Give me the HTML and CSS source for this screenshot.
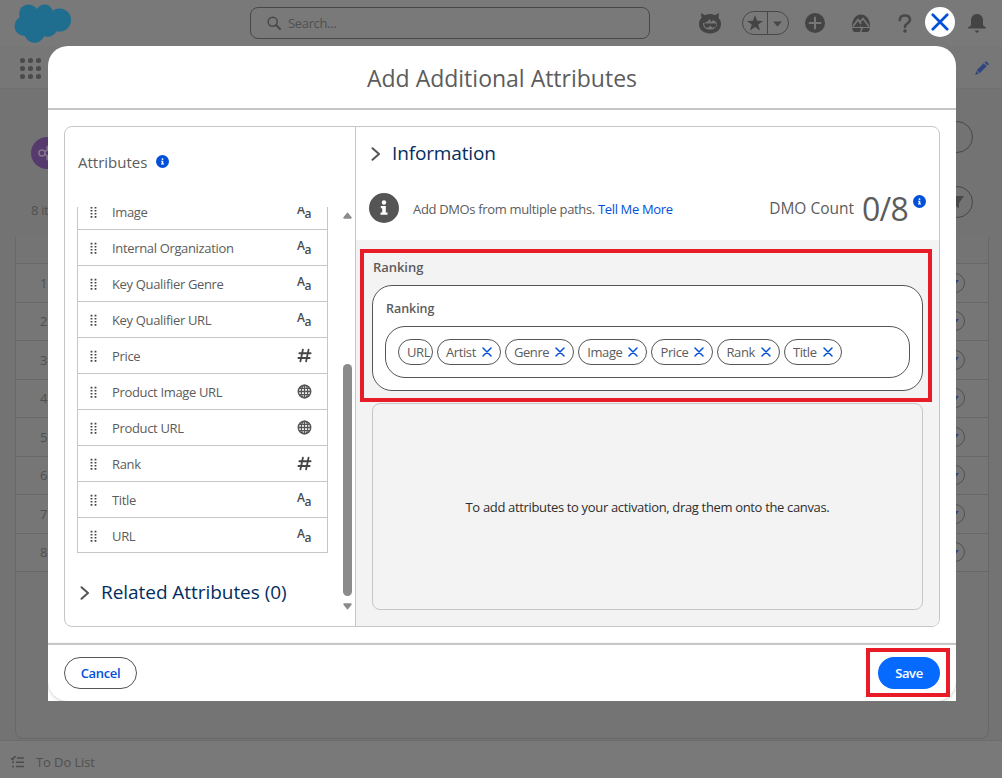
FILE: index.html
```html
<!DOCTYPE html>
<html lang="en">
<head>
  <meta charset="UTF-8">
  <title>Add Additional Attributes</title>
  <meta name="viewport" content="width=device-width, initial-scale=1.0">
  <link rel="stylesheet" href="styles.css">
</head>

<body>

<!-- shared icons -->
<svg class="sprite">
  <symbol id="i-info" viewBox="0 0 30 30">
    <circle cx="15" cy="15" r="15"/>
    <g fill="#fff"><circle cx="15" cy="9.500" r="2.200"/><path d="M11.800 13h5v6.500h1.700v2.300h-7v-2.300h1.700v-4.200h-1.400z"/></g>
  </symbol>
  <symbol id="i-close" viewBox="0 0 10 10">
    <path d="M1 1l8 8M9 1l-8 8" fill="none" stroke="currentColor" stroke-width="1.500" stroke-linecap="round"/>
  </symbol>
  <symbol id="i-chevron" viewBox="0 0 10 14">
    <path d="M1.500 1.200L8 7l-6.500 5.800" fill="none" stroke="#555" stroke-width="2" stroke-linecap="round" stroke-linejoin="round"/>
  </symbol>
  <symbol id="i-drag" viewBox="0 0 7 12">
    <path d="M1.500 .8v12M5.500 .8v12" fill="none" stroke="#444" stroke-width="1.800" stroke-dasharray="1.600 1.500"/>
  </symbol>
  <symbol id="i-hash" viewBox="0 0 14 14">
    <path d="M5.500 1.500L3.200 12.500M10.800 1.500L8.500 12.500M2.200 4.900h10.500M1.300 9.300h10.500" fill="none" stroke="#444" stroke-width="1.700" stroke-linecap="round"/>
  </symbol>
  <symbol id="i-globe" viewBox="0 0 14 14">
    <g fill="none" stroke="#555" stroke-width="1.200"><circle cx="7" cy="7" r="5.800" stroke-width="1.400"/><ellipse cx="7" cy="7" rx="3" ry="6"/><path d="M7 1v12M1 7h12M2 4h10M2 10h10"/></g>
  </symbol>
  <symbol id="i-down" viewBox="0 0 8 5"><path d="M0 0h8L4 5z"/></symbol>
</svg>

<div class="page">
  <header class="topbar">
    <svg class="logo" viewBox="0 0 58 42">
      <g fill="#1f6e8f"><circle cx="15" cy="12" r="9.500"/><circle cx="31" cy="11" r="8.500"/><circle cx="46" cy="18" r="11.500"/><circle cx="11" cy="24" r="10"/><circle cx="21" cy="31" r="10"/><circle cx="34" cy="25" r="10"/><circle cx="27" cy="18" r="12"/></g>
    </svg>
    <div class="search">
      <svg width="14" height="14" viewBox="0 0 14 14"><path d="M9 9l4 4" stroke="#484848" stroke-width="2" stroke-linecap="round"/><circle cx="5.700" cy="5.700" r="4.500" fill="none" stroke="#484848" stroke-width="1.500"/></svg>
      <span>Search...</span>
    </div>
    <div class="tools">
      <svg class="t-astro" width="24" height="22" viewBox="0 0 24 22">
        <path fill="#444" d="M3 1l4 2.300a11 11 0 0 1 10 0L21 1l-.5 5c2 2 2.500 3.500 2.500 6 0 6-5 9.500-11 9.500S1 18 1 12c0-2.500.5-4 2.500-6z"/>
        <path fill="#777" d="M5 11c3 0 5-2 7-4l1 3 2-2c2 1 3 2 4 3 0 5-3 6.500-7 6.500s-7-1.500-7-6.500z"/>
        <path fill="#444" d="M6 11.500h12.500l-1 3.500q-2 1-4 0l-1.200-1.500L11 15q-2 1-4 0z"/>
      </svg>
      <div class="favs">
        <svg width="16" height="16" viewBox="0 0 16 16"><path fill="#444" d="M8 0l2 5.800 6 .1-4.800 3.700L13 15.500 8 12l-5 3.500 1.800-5.900L0 5.900l6-.1z"/></svg>
        <i></i>
        <svg class="favs-down" width="9" height="6" viewBox="0 0 8 5" fill="#484848"><use href="#i-down"/></svg>
      </div>
      <svg class="t-add" width="20" height="20" viewBox="0 0 20 20"><circle cx="10" cy="10" r="10" fill="#444"/><path d="M10 4.500v11M4.500 10h11" stroke="#777" stroke-width="2" stroke-linecap="round"/></svg>
      <svg class="t-trail" width="20" height="20" viewBox="0 0 20 20">
        <path fill="#444" d="M1 12C1.500 6 5 1.500 10 1.500S18.500 6 19 12v2H1z"/>
        <path d="M2 13.500l5-7 3 4.500M8.500 9.500L12 5.500l6 8" fill="none" stroke="#777" stroke-width="1.700"/>
        <path d="M1 15h18q-.5 3-2.500 4h-13Q1.500 18 1 15z" fill="#444"/>
        <path d="M9 13.500l2 2-1.500 3.500" fill="none" stroke="#777" stroke-width="1.500"/>
      </svg>
      <svg class="t-help" width="14" height="19" viewBox="0 0 14 19"><path d="M1.800 6C1.800 3 4 1.500 7 1.500S12 3.300 12 6c0 3.500-5 3-5 7" fill="none" stroke="#484848" stroke-width="2.600" stroke-linecap="round"/><circle cx="7" cy="17" r="1.800" fill="#484848"/></svg>
      <svg class="t-bell" width="18" height="19" viewBox="0 0 18 19"><path fill="#444" d="M9 0c4 0 6 3 6 6.500V11c0 1 3 1.500 3 3.500H0C0 12.500 3 12 3 11V6.500C3 3 5 0 9 0zM6.500 16.500h5L9 19z"/></svg>
    </div>
  </header>
  <nav class="navbar">
    <div class="waffle"><i></i><i></i><i></i><i></i><i></i><i></i><i></i><i></i><i></i></div>
    <svg width="14" height="14" viewBox="0 0 14 14" fill="#2f4580"><path d="M1.700 9.200l7-7 3 3-7 7zM9.500 1.500l1-1q.5-.5 1 0l2 2q.5.5 0 1l-1 1zM1.200 10l2.700 2.700L.3 13.700z"/></svg>
  </nav>

  <main class="board">
    <div class="board-head">
      <div class="obj-icon"><svg width="20" height="20" viewBox="0 0 20 20" fill="none" stroke="#847691" stroke-width="1.500"><circle cx="5" cy="10" r="3"/><circle cx="12" cy="5" r="2"/><circle cx="12" cy="15" r="2"/><path d="M8 9l3-3M8 11l3 3"/></svg></div>
      <div class="round-btn"></div>
    </div>
    <div class="board-sub">
      <span>8 items</span>
      <div class="round-btn"><svg width="14" height="14" viewBox="0 0 14 14"><path fill="#484848" d="M0 1h14L9 8v5L5 11V8z"/></svg></div>
    </div>
    <div class="table">
      <div class="thead"></div>
      <div class="trow"><span>1</span><b><svg viewBox="0 0 8 5"><use href="#i-down"/></svg></b></div>
      <div class="trow"><span>2</span><b><svg viewBox="0 0 8 5"><use href="#i-down"/></svg></b></div>
      <div class="trow"><span>3</span><b><svg viewBox="0 0 8 5"><use href="#i-down"/></svg></b></div>
      <div class="trow"><span>4</span><b><svg viewBox="0 0 8 5"><use href="#i-down"/></svg></b></div>
      <div class="trow"><span>5</span><b><svg viewBox="0 0 8 5"><use href="#i-down"/></svg></b></div>
      <div class="trow"><span>6</span><b><svg viewBox="0 0 8 5"><use href="#i-down"/></svg></b></div>
      <div class="trow"><span>7</span><b><svg viewBox="0 0 8 5"><use href="#i-down"/></svg></b></div>
      <div class="trow"><span>8</span><b><svg viewBox="0 0 8 5"><use href="#i-down"/></svg></b></div>
    </div>
  </main>

  <footer class="utility">
    <svg width="13" height="12" viewBox="0 0 13 12" fill="none" stroke="#4c4c4c" stroke-width="1.600"><path d="M0 2l1.500 1.500L4.500 0M6 2h7M5 6.300h8M5 10.500h8M1 6.300h2M1 10.500h2"/></svg>
    <span>To Do List</span>
  </footer>
</div>

<button class="modal-close"><svg width="18" height="18"><use href="#i-close"/></svg></button>

<div class="modal">
  <div class="modal-header"><h1>Add Additional Attributes</h1></div>

  <div class="modal-body">
    <div class="panel">
      <aside class="attributes">
        <div class="attributes-title">Attributes <svg class="info-sm"><use href="#i-info"/></svg></div>
        <div class="attributes-scroll">
          <div class="attributes-content">
            <ul class="attr-list">
              <li><svg class="drag"><use href="#i-drag"/></svg><span>Image</span><em>A<sub>a</sub></em></li>
              <li><svg class="drag"><use href="#i-drag"/></svg><span>Internal Organization</span><em>A<sub>a</sub></em></li>
              <li><svg class="drag"><use href="#i-drag"/></svg><span>Key Qualifier Genre</span><em>A<sub>a</sub></em></li>
              <li><svg class="drag"><use href="#i-drag"/></svg><span>Key Qualifier URL</span><em>A<sub>a</sub></em></li>
              <li><svg class="drag"><use href="#i-drag"/></svg><span>Price</span><svg class="type"><use href="#i-hash"/></svg></li>
              <li><svg class="drag"><use href="#i-drag"/></svg><span>Product Image URL</span><svg class="type"><use href="#i-globe"/></svg></li>
              <li><svg class="drag"><use href="#i-drag"/></svg><span>Product URL</span><svg class="type"><use href="#i-globe"/></svg></li>
              <li><svg class="drag"><use href="#i-drag"/></svg><span>Rank</span><svg class="type"><use href="#i-hash"/></svg></li>
              <li><svg class="drag"><use href="#i-drag"/></svg><span>Title</span><em>A<sub>a</sub></em></li>
              <li><svg class="drag"><use href="#i-drag"/></svg><span>URL</span><em>A<sub>a</sub></em></li>
            </ul>
            <h2 class="related"><svg class="chevron"><use href="#i-chevron"/></svg>Related Attributes (0)</h2>
          </div>
          <div class="scrollbar">
            <svg width="9" height="7" viewBox="0 0 10 7"><path d="M5 0l4.500 5.500q.5 1.500-1 1.500h-7Q0 7 .5 5.500z"/></svg>
            <div class="thumb"></div>
            <svg width="9" height="7" viewBox="0 0 10 7"><path d="M5 7L.5 1.500Q0 0 1.500 0h7q1.500 0 1 1.500z"/></svg>
          </div>
        </div>
      </aside>

      <section class="canvas">
        <div class="canvas-info">
          <h2><svg class="chevron"><use href="#i-chevron"/></svg>Information</h2>
          <div class="dmo">
            <svg class="info-lg"><use href="#i-info"/></svg>
            <p>Add DMOs from multiple paths. <a>Tell Me More</a></p>
            <span class="dmo-label">DMO Count</span>
            <span class="dmo-count">0/8</span>
            <svg class="info-sm"><use href="#i-info"/></svg>
          </div>
        </div>

        <div class="canvas-area">
          <div class="highlight highlight-ranking"></div>
          <h3>Ranking</h3>
          <div class="ranking">
            <h4>Ranking</h4>
            <div class="pills">
              <span class="pill pill-cut">URL</span>
              <span class="pill">Artist <svg><use href="#i-close"/></svg></span>
              <span class="pill">Genre <svg><use href="#i-close"/></svg></span>
              <span class="pill">Image <svg><use href="#i-close"/></svg></span>
              <span class="pill">Price <svg><use href="#i-close"/></svg></span>
              <span class="pill">Rank <svg><use href="#i-close"/></svg></span>
              <span class="pill">Title <svg><use href="#i-close"/></svg></span>
            </div>
          </div>
          <div class="dropzone">To add attributes to your activation, drag them onto the canvas.</div>
        </div>
      </section>
    </div>
  </div>

  <div class="modal-footer">
    <button class="btn">Cancel</button>
    <button class="btn btn-primary">Save</button>
    <div class="highlight highlight-save"></div>
  </div>
</div>

</body>
</html>
```
FILE: styles.css
```css
* {
  margin: 0;
  padding: 0;
  box-sizing: border-box;
}

body {
  width: 1002px;
  height: 778px;
  overflow: hidden;
  position: relative;
  font-family: "Open Sans", "Noto Sans", sans-serif;
  font-size: 13px;
  letter-spacing: -0.34px;
  color: #5c5c5c;
}

svg {
  display: block;
  flex: none;
}

.sprite {
  position: absolute;
  width: 0;
  height: 0;
}

/* page behind the modal */
.page {
  height: 778px;
  display: flex;
  flex-direction: column;
  background: #737373;
  color: #505050;
}

.topbar {
  height: 46px;
  display: flex;
  align-items: center;
  padding-left: 13px;
  background: #797979;
}

.logo {
  width: 59px;
  height: 42px;
}

.search {
  width: 400px;
  height: 32px;
  margin-left: 178px;
  padding-left: 16px;
  display: flex;
  align-items: center;
  gap: 7px;
  border: 1px solid #484848;
  border-radius: 8px;
}

.tools {
  display: flex;
  align-items: center;
  margin-left: 48px;
}

.favs {
  width: 47px;
  height: 24px;
  margin-left: 20px;
  padding: 0 4px;
  display: flex;
  align-items: center;
  gap: 4px;
  border: 1px solid #484848;
  border-radius: 12px;
}

.favs i {
  width: 1px;
  height: 22px;
  background: #484848;
}

.favs-down {
  margin: 2px 0 0 1px;
}

.t-add { margin-left: 16px; }
.t-trail { margin-left: 26px; }
.t-help { margin-left: 27px; }
.t-bell { margin-left: 56px; }

.navbar {
  height: 43px;
  display: flex;
  justify-content: space-between;
  align-items: center;
  padding: 2px 13px 0 20px;
  background: #777;
  border-bottom: 1px solid #707070;
}

.waffle {
  display: grid;
  grid-template-columns: repeat(3, 5px);
  gap: 3px;
}

.waffle i {
  width: 5px;
  height: 5px;
  border-radius: 50%;
  background: #4a4a4a;
}

.board {
  flex: 1;
  padding: 32px 13px 0 15px;
}

.board-head,
.board-sub {
  display: flex;
  justify-content: space-between;
  padding: 0 16px;
}

.board-head {
  height: 65px;
}

.board-sub {
  height: 51px;
}

.board-sub span {
  padding-top: 15px;
}

.obj-icon {
  width: 32px;
  height: 32px;
  margin-top: 16px;
  padding: 6px;
  border-radius: 50%;
  background: #573a6d;
}

.round-btn {
  width: 32px;
  height: 32px;
  display: flex;
  align-items: center;
  justify-content: center;
  border: 1px solid #484848;
  border-radius: 50%;
}

.table {
  height: 502px;
  border: 1px solid #686868;
  border-top: 0;
  border-radius: 0 0 8px 8px;
  background: #747474;
}

.thead {
  height: 27px;
  border-bottom: 1px solid #686868;
}

.trow {
  height: 38.5px;
  display: flex;
  align-items: center;
  justify-content: space-between;
  padding: 0 23px 0 24px;
  border-bottom: 1px solid #686868;
  background: #767676;
}

.trow b {
  width: 20px;
  height: 20px;
  display: flex;
  align-items: center;
  justify-content: center;
  border: 1px solid #505050;
  border-radius: 50%;
}

.trow b svg {
  width: 8px;
  height: 5px;
  fill: #34427a;
}

.utility {
  height: 38px;
  display: flex;
  align-items: center;
  gap: 12px;
  padding: 4px 0 0 11px;
  border-top: 1px solid #6c6c6c;
  background: #797979;
  letter-spacing: -0.1px;
}

/* modal */
.modal-close {
  position: absolute;
  left: 925px;
  top: 7px;
  width: 30px;
  height: 30px;
  display: flex;
  align-items: center;
  justify-content: center;
  border: 0;
  border-radius: 50%;
  background: #fff;
  color: #0250d9;
}

.modal {
  position: absolute;
  left: 48px;
  top: 46px;
  width: 908px;
  height: 655px;
  display: flex;
  flex-direction: column;
  overflow: hidden;
  border-radius: 20px 20px 0 0;
  background: #fff;
}

.modal-header {
  height: 64px;
  padding-top: 16px;
  border-bottom: 2px solid #c6c6c6;
  text-align: center;
}

h1 {
  font-size: 23px;
  line-height: 33px;
  font-weight: 400;
  letter-spacing: 0;
}

.modal-body {
  flex: 1;
  padding: 16px;
}

.panel {
  height: 501px;
  display: flex;
  overflow: hidden;
  border: 1px solid #c6c6c6;
  border-radius: 8px;
}

.attributes {
  width: 291px;
  border-right: 1px solid #c6c6c6;
}

.attributes-title {
  height: 80px;
  display: flex;
  align-items: center;
  gap: 9px;
  padding: 0 0 11px 13px;
  font-size: 15px;
  letter-spacing: 0;
}

.info-sm {
  width: 13px;
  height: 13px;
  fill: #0250d9;
}

.attributes-scroll {
  height: 419px;
  display: flex;
  overflow: hidden;
}

.attributes-content {
  width: 263px;
  margin-top: -13px;
  padding-left: 12px;
}

.attr-list {
  list-style: none;
  border: 1px solid #c6c6c6;
  border-top: 0;
}

.attr-list li {
  height: 36px;
  display: flex;
  align-items: center;
  padding: 0 15px 0 12px;
  border-bottom: 1px solid #c6c6c6;
}

.attr-list li:last-child {
  height: 35px;
  margin-bottom: -1px;
  border-bottom: 0;
}

.attr-list span {
  flex: 1;
  margin-left: 15px;
}

.drag {
  width: 7px;
  height: 12px;
}

.type {
  width: 15px;
  height: 15px;
}

.attr-list em {
  width: 15px;
  height: 18px;
  font-style: normal;
  font-weight: 600;
  font-size: 12px;
  line-height: 14px;
  white-space: nowrap;
  color: #4a4a4a;
}

.attr-list sub {
  font-size: 12px;
  line-height: 0;
  position: relative;
  top: 1px;
  vertical-align: sub;
}

h2 {
  display: flex;
  align-items: center;
  font-size: 19px;
  line-height: 26px;
  font-weight: 400;
  letter-spacing: -0.15px;
  color: #032d60;
}

.chevron {
  width: 10px;
  height: 14px;
  margin: 2px 11px 0 0;
}

.related {
  padding: 26px 0 0 3px;
  letter-spacing: -0.05px;
}

.scrollbar {
  width: 9px;
  margin-left: 15px;
  padding-top: 5px;
  fill: #8b8b8b;
}

.thumb {
  width: 9px;
  height: 232px;
  margin: 145px 0 7px;
  border-radius: 5px;
  background: #8b8b8b;
}

.canvas {
  flex: 1;
  display: flex;
  flex-direction: column;
}

.canvas-info {
  height: 113px;
  padding: 13px 13px 0 13px;
}

.canvas-info h2 {
  padding-left: 2px;
}

.dmo {
  height: 48px;
  margin-top: 18px;
  display: flex;
  align-items: center;
}

.info-lg {
  width: 30px;
  height: 30px;
  margin-bottom: 1px;
  fill: #555;
}

.dmo p {
  flex: 1;
  margin: 2px 0 0 14px;
}

.dmo a {
  color: #0250d9;
}

.dmo-label {
  font-size: 15.5px;
  letter-spacing: 0;
}

.dmo-count {
  margin: 0 5px 0 8px;
  font-size: 32px;
  letter-spacing: -0.8px;
}

.dmo .info-sm {
  margin-bottom: 13px;
}

.canvas-area {
  flex: 1;
  position: relative;
  padding: 18px 16px 16px;
  background: #f3f3f3;
}

h3,
h4 {
  padding-left: 1px;
  font-size: 13px;
  line-height: 18px;
  font-weight: 600;
  letter-spacing: -0.05px;
}

.ranking {
  height: 106px;
  margin-top: 9px;
  padding: 14px 12px;
  border: 1px solid #555;
  border-radius: 20px;
  background: #fff;
}

h4 {
  font-size: 12.5px;
}

.pills {
  height: 52px;
  margin-top: 8px;
  padding: 12px;
  display: flex;
  gap: 4px;
  border: 1px solid #555;
  border-radius: 20px;
}

.pill {
  height: 26px;
  display: flex;
  align-items: center;
  gap: 6px;
  padding: 0 8px;
  border: 1px solid #555;
  border-radius: 13px;
  letter-spacing: -0.4px;
}

.pill svg {
  width: 10px;
  height: 10px;
  color: #0250d9;
}

.pill-cut {
  width: 35px;
  overflow: hidden;
}

.dropzone {
  height: 207px;
  margin-top: 12px;
  display: flex;
  align-items: center;
  justify-content: center;
  border: 1px solid #c6c6c6;
  border-radius: 8px;
  color: #2e2e2e;
}

.modal-footer {
  position: relative;
  height: 58px;
  display: flex;
  justify-content: space-between;
  padding: 12px 16px 0;
  border-top: 2px solid #c6c6c6;
  border-radius: 0 0 20px 20px;
  box-shadow: 0 1px 3px rgba(0, 0, 0, 0.2);
}

.btn {
  width: 73px;
  height: 32px;
  border: 1px solid #555;
  border-radius: 16px;
  background: #fff;
  color: #0250d9;
  font-family: inherit;
  font-size: 13px;
  font-weight: 600;
  letter-spacing: -0.35px;
}

.btn-primary {
  width: 62px;
  border: 0;
  background: #066afe;
  color: #fff;
}

/* red callouts */
.highlight {
  position: absolute;
  border: 4px solid #e81c26;
}

.highlight-ranking {
  left: 4px;
  top: 9px;
  width: 572px;
  height: 153px;
}

.highlight-save {
  right: 6px;
  top: 3px;
  width: 84px;
  height: 49px;
}
```
